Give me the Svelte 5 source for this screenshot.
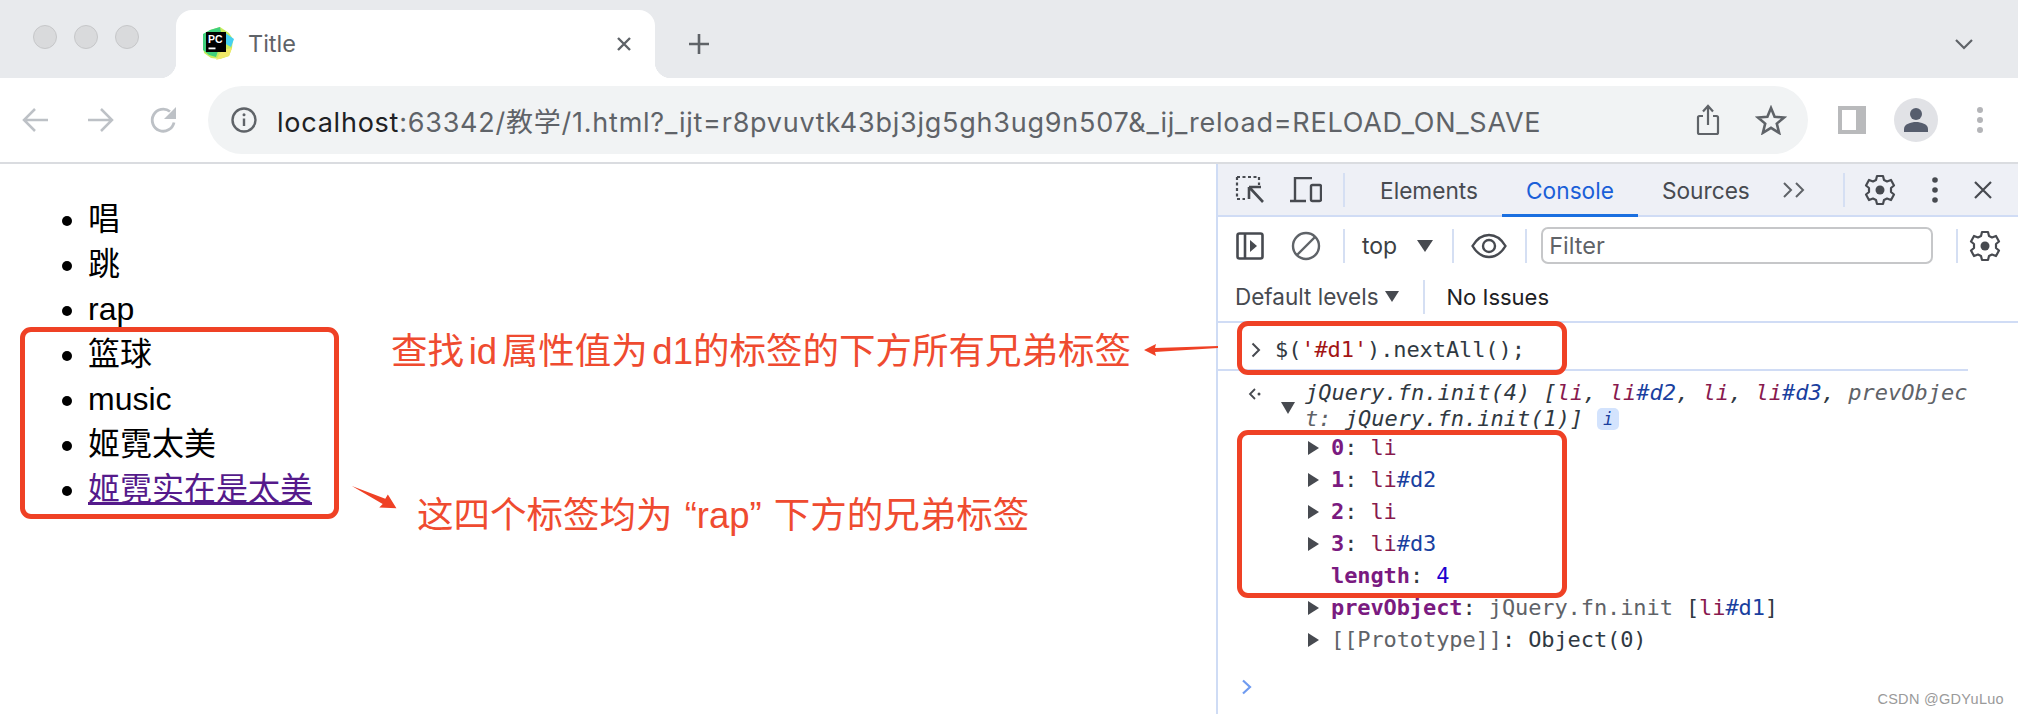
<script>
  const items = ['唱', '跳', 'rap', '篮球', 'music', '姬霓太美'];

  // expandable entries of the logged jQuery object
  const entries = [
    { key: '0', tag: 'li', id: '' },
    { key: '1', tag: 'li', id: '#d2' },
    { key: '2', tag: 'li', id: '' },
    { key: '3', tag: 'li', id: '#d3' },
  ];
</script>

<div class="window">
  <header class="tabstrip">
    <div class="lights"><i></i><i></i><i></i></div>
    <div class="tab">
      <svg class="favicon" width="32" height="34" viewBox="0 0 32 34">
        <path d="M8 4 18 1l9 6 4 6-1 9-3 8-9 3-9-1-7-5-1-9 1-10z" fill="#c8ec5c" />
        <path d="M1 8 8 4l10-3 2 12-6 18-7-2-6-5z" fill="#3fd07c" />
        <path d="M22 6 32 13l-3 8-7-4z" fill="#45d0f0" />
        <path d="M14 34 27 30l3-8-10 2z" fill="#f0e868" />
        <rect x="4" y="6" width="20" height="20" fill="#000" />
        <text x="6" y="16.500" class="pc">PC</text>
        <rect x="6.500" y="21.500" width="7" height="1.800" fill="#fff" />
      </svg>
      <span class="title">Title</span>
      <svg class="tab-close" width="20" height="20" viewBox="0 0 20 20">
        <path d="M4 4l12 12M16 4 4 16" stroke="#5f6368" stroke-width="2.400" />
      </svg>
    </div>
    <svg class="newtab" width="24" height="24" viewBox="0 0 24 24">
      <path d="M12 2v20M2 12h20" stroke="#5f6368" stroke-width="2.600" />
    </svg>
    <svg class="chev" width="22" height="14" viewBox="0 0 22 14">
      <path d="M3 3l8 8 8-8" fill="none" stroke="#5f6368" stroke-width="2.200" />
    </svg>
  </header>

  <nav class="toolbar">
    <span class="cell">
      <svg width="30" height="28" viewBox="0 0 30 28"><path d="M27 14H4M14 3 3 14l11 11" fill="none" stroke="#bdc1c6" stroke-width="2.500" /></svg>
    </span>
    <span class="cell">
      <svg width="30" height="28" viewBox="0 0 30 28"><path d="M3 14h23M16 3l11 11-11 11" fill="none" stroke="#bdc1c6" stroke-width="2.500" /></svg>
    </span>
    <span class="cell">
      <svg width="30" height="30" viewBox="0 0 30 30"><path d="M25 17.500A11 11 0 1 1 21 6.500" fill="none" stroke="#bdc1c6" stroke-width="2.800" /><path d="M27 2v12H15z" fill="#bdc1c6" /></svg>
    </span>
    <div class="omnibox">
      <svg class="info" width="28" height="28" viewBox="0 0 28 28">
        <circle cx="14" cy="14" r="11.500" fill="none" stroke="#5f6368" stroke-width="2.400" />
        <path d="M14 12.500v7.500" stroke="#5f6368" stroke-width="2.400" />
        <circle cx="14" cy="8.800" r="1.500" fill="#5f6368" />
      </svg>
      <span class="url"><b>localhost</b>:63342/教学/1.html?_ijt=r8pvuvtk43bj3jg5gh3ug9n507&amp;_ij_reload=RELOAD_ON_SAVE</span>
      <svg class="share" width="24" height="32" viewBox="0 0 24 32">
        <path d="M7 12H3.500a1.500 1.500 0 0 0-1.500 1.500v15A1.500 1.500 0 0 0 3.500 30h17a1.500 1.500 0 0 0 1.500-1.500v-15a1.500 1.500 0 0 0-1.500-1.500H17" fill="none" stroke="#5f6368" stroke-width="2.200" />
        <path d="M12 21V3M7 7.500 12 2l5 5.500" fill="none" stroke="#5f6368" stroke-width="2.200" />
      </svg>
      <svg class="star" width="32" height="30" viewBox="0 0 32 30">
        <path d="M16 3l3.600 8.800 9.400.7-7.200 6.100 2.300 9.200L16 22.800l-8.100 5 2.300-9.200L3 12.500l9.400-.7z" fill="none" stroke="#5f6368" stroke-width="2.600" />
      </svg>
    </div>
    <span class="cell side">
      <svg width="28" height="28" viewBox="0 0 28 28"><rect width="28" height="28" fill="#b9babc" /><rect x="4" y="4" width="14" height="20" fill="#fff" /></svg>
    </span>
    <span class="cell">
      <svg width="44" height="44" viewBox="0 0 44 44">
        <circle cx="22" cy="22" r="22" fill="#e1e2e6" />
        <circle cx="22" cy="16" r="6" fill="#565d6d" />
        <path d="M10 34v-3c0-5 7-7 12-7s12 2 12 7v3z" fill="#565d6d" />
      </svg>
    </span>
    <span class="cell">
      <svg width="6" height="26" viewBox="0 0 6 26"><circle cx="3" cy="3" r="3" fill="#b4b5b8" /><circle cx="3" cy="13" r="3" fill="#b4b5b8" /><circle cx="3" cy="23" r="3" fill="#b4b5b8" /></svg>
    </span>
  </nav>

  <main class="content">
    <section class="page">
      <ul>
        {#each items as item}
          <li>{item}</li>
        {/each}
        <li><a href="#top">姬霓实在是太美</a></li>
      </ul>
    </section>

    <section class="devtools">
      <div class="dt-tabs">
        <span class="dt-cell wide">
          <svg width="30" height="30" viewBox="0 0 30 30">
            <path d="M2 2h22v8M2 2v22h8" fill="none" stroke="#474a50" stroke-width="2.200" stroke-dasharray="3 2.500" />
            <path d="M14 12v12M14 12h12M15 13l13 14" fill="none" stroke="#474a50" stroke-width="2.600" />
          </svg>
        </span>
        <span class="dt-cell">
          <svg width="32" height="26" viewBox="0 0 32 26">
            <path d="M22 1H5v22M0 24h16" fill="none" stroke="#474a50" stroke-width="2.400" />
            <rect x="21" y="8" width="10" height="16" rx="1.500" fill="none" stroke="#474a50" stroke-width="2.400" />
          </svg>
        </span>
        <span class="dt-sep first"></span>
        <span class="dt-tab first-tab">Elements</span>
        <span class="dt-tab active">Console</span>
        <span class="dt-tab">Sources</span>
        <svg class="more" width="26" height="18" viewBox="0 0 26 18">
          <path d="M2 2l7 7-7 7M14 2l7 7-7 7" fill="none" stroke="#5f6368" stroke-width="2" />
        </svg>
        <span class="dt-sep after-more"></span>
        <svg class="gear g-top" width="32" height="32" viewBox="0 0 32 32">
          <path d="M13 2h6l1 4 3 1.500 4-1.500 3 5.500-3 2.500v4l3 2.500-3 5.500-4-1.500-3 1.500-1 4h-6l-1-4-3-1.500-4 1.500-3-5.500 3-2.500v-4l-3-2.500 3-5.500 4 1.500 3-1.500z" fill="none" stroke="#474a50" stroke-width="2.200" stroke-linejoin="round" />
          <circle cx="16" cy="16" r="4.500" fill="#474a50" />
        </svg>
        <svg class="vdots" width="6" height="26" viewBox="0 0 6 26"><circle cx="3" cy="3" r="2.800" fill="#474a50" /><circle cx="3" cy="13" r="2.800" fill="#474a50" /><circle cx="3" cy="23" r="2.800" fill="#474a50" /></svg>
        <svg class="dt-close" width="20" height="20" viewBox="0 0 20 20"><path d="M2 2l16 16M18 2 2 18" stroke="#474a50" stroke-width="2.200" /></svg>
      </div>

      <div class="dt-row filter-row">
        <span class="dt-cell wide">
          <svg width="28" height="28" viewBox="0 0 28 28">
            <rect x="1.500" y="1.500" width="25" height="25" rx="2" fill="none" stroke="#474a50" stroke-width="2.600" />
            <path d="M9 1.500v25" stroke="#474a50" stroke-width="2.600" />
            <path d="M14 8l7 6-7 6z" fill="#474a50" />
          </svg>
        </span>
        <span class="dt-cell">
          <svg width="30" height="30" viewBox="0 0 30 30">
            <circle cx="15" cy="15" r="13" fill="none" stroke="#5f6368" stroke-width="2.400" />
            <path d="M24 6 6 24" stroke="#5f6368" stroke-width="2.400" />
          </svg>
        </span>
        <span class="dt-sep first"></span>
        <span class="top-label">top</span>
        <svg class="tri" width="16" height="12" viewBox="0 0 16 12"><path d="M0 0h16L8 12z" fill="#474a50" /></svg>
        <span class="dt-sep tight"></span>
        <svg class="eye" width="36" height="26" viewBox="0 0 36 26">
          <path d="M1.500 13C6 5.500 12 2 18 2s12 3.500 16.500 11C30 20.500 24 24 18 24S6 20.500 1.500 13z" fill="none" stroke="#474a50" stroke-width="2.400" />
          <circle cx="18" cy="13" r="6" fill="none" stroke="#474a50" stroke-width="2.400" />
        </svg>
        <span class="dt-sep eye-sep"></span>
        <div class="filter">Filter</div>
        <span class="dt-sep filter-sep"></span>
        <svg class="gear g-row" width="32" height="32" viewBox="0 0 32 32">
          <path d="M13 2h6l1 4 3 1.500 4-1.500 3 5.500-3 2.500v4l3 2.500-3 5.500-4-1.500-3 1.500-1 4h-6l-1-4-3-1.500-4 1.500-3-5.500 3-2.500v-4l-3-2.500 3-5.500 4 1.500 3-1.500z" fill="none" stroke="#474a50" stroke-width="2.200" stroke-linejoin="round" />
          <circle cx="16" cy="16" r="4.500" fill="#474a50" />
        </svg>
      </div>

      <div class="dt-row levels-row">
        <span class="levels">Default levels</span>
        <svg class="tri small" width="14" height="11" viewBox="0 0 14 11"><path d="M0 0h14L7 11z" fill="#474a50" /></svg>
        <span class="dt-sep levels-sep"></span>
        <span class="issues">No Issues</span>
      </div>

      <div class="console">
        <div class="input-line">
          <svg class="prompt" width="10" height="16" viewBox="0 0 10 16"><path d="M1.500 1.500 8 8l-6.500 6.500" fill="none" stroke="#474a50" stroke-width="2" /></svg>
          <code>$(<span class="str">'#d1'</span>).nextAll();</code>
        </div>
        <div class="output">
          <svg class="ret" width="14" height="14" viewBox="0 0 14 14"><path d="M7 2 2 7l5 5" fill="none" stroke="#474a50" stroke-width="1.800" /><circle cx="11" cy="7" r="1.500" fill="#474a50" /></svg>
          <svg class="open" width="14" height="12" viewBox="0 0 14 12"><path d="M0 0h14L7 12z" fill="#474a50" /></svg>
          <code class="summary">jQuery.fn.init(4) [<span class="tag">li</span>, <span class="tag">li</span><span class="idn">#d2</span>, <span class="tag">li</span>, <span class="tag">li</span><span class="idn">#d3</span>, <span class="dim">prevObjec<br />t:</span> jQuery.fn.init(1)]<span class="badge">i</span></code>
        </div>
        {#each entries as e}
          <div class="prop">
            <svg class="caret" width="11" height="14" viewBox="0 0 11 14"><path d="M0 0l11 7-11 7z" fill="#474a50" /></svg>
            <code><span class="key">{e.key}</span>: <span class="tag">{e.tag}</span><span class="idn">{e.id}</span></code>
          </div>
        {/each}
        <div class="prop">
          <code class="nocaret"><span class="key">length</span>: <span class="num">4</span></code>
        </div>
        <div class="prop">
          <svg class="caret" width="11" height="14" viewBox="0 0 11 14"><path d="M0 0l11 7-11 7z" fill="#474a50" /></svg>
          <code><span class="key">prevObject</span>: <span class="dim">jQuery.fn.init</span> [<span class="tag">li</span><span class="idn">#d1</span>]</code>
        </div>
        <div class="prop">
          <svg class="caret" width="11" height="14" viewBox="0 0 11 14"><path d="M0 0l11 7-11 7z" fill="#474a50" /></svg>
          <code><span class="dim">[[Prototype]]</span>: Object(0)</code>
        </div>
        <svg class="caret-input" width="12" height="16" viewBox="0 0 12 16"><path d="M2 1.500 9 8l-7 6.500" fill="none" stroke="#6f9bf0" stroke-width="2.200" /></svg>
      </div>
    </section>

    <!-- annotations drawn on top of the screenshot -->
    <div class="box box-list"></div>
    <div class="box box-input"></div>
    <div class="box box-props"></div>
    <p class="note note-a">查找 id 属性值为 d1的标签的下方所有兄弟标签</p>
    <p class="note note-b">这四个标签均为 “rap” 下方的兄弟标签</p>
    <svg class="arrow arrow-a" width="74" height="16" viewBox="0 0 74 16"><path d="M0 8 12 2l-1 4 63-2v2L11 10l1 4z" fill="#ef4125" /></svg>
    <svg class="arrow arrow-b" width="50" height="24" viewBox="0 0 54 28"><path d="M0 0 39 15l3-5 10 16-20-1 4-4z" fill="#ef4125" /></svg>
    <span class="mark">CSDN @GDYuLuo</span>
  </main>
</div>

<style>
  :global(body) {
    margin: 0;
    background: #fff;
    overflow: hidden;
  }

  .window {
    width: 2018px;
    height: 714px;
    display: flex;
    flex-direction: column;
    font-family: Inter, "Noto Sans CJK SC", sans-serif;
  }

  /* tab strip */
  .tabstrip {
    height: 78px;
    flex: none;
    display: flex;
    align-items: flex-end;
    background: #e8eaed;
  }
  .lights {
    width: 176px;
    height: 78px;
    flex: none;
    display: flex;
    align-items: center;
    gap: 17px;
    padding: 0 0 4px 33px;
    box-sizing: border-box;
  }
  .lights i {
    width: 24px;
    height: 24px;
    box-sizing: border-box;
    border-radius: 50%;
    background: #d9dadc;
    border: 1px solid #c6c7c9;
  }
  .tab {
    position: relative;
    width: 479px;
    height: 68px;
    display: flex;
    align-items: center;
    padding: 0 0 0 26px;
    box-sizing: border-box;
    background: #fff;
    border-radius: 16px 16px 0 0;
  }
  .tab::before,
  .tab::after {
    content: "";
    position: absolute;
    bottom: 0;
    width: 16px;
    height: 16px;
  }
  .tab::before {
    left: -16px;
    background: radial-gradient(circle at 0 0, #e8eaed 16px, #fff 16.500px);
  }
  .tab::after {
    right: -16px;
    background: radial-gradient(circle at 100% 0, #e8eaed 16px, #fff 16.500px);
  }
  .favicon { flex: none; margin-top: -2px; }
  .pc {
    font: 700 10.500px "Liberation Sans", sans-serif;
    fill: #fff;
  }
  .title {
    margin-left: 14px;
    padding-bottom: 1px;
    font-size: 23.500px;
    color: #5f6368;
    flex: 1;
  }
  .tab-close { margin-right: 21px; }
  .newtab {
    align-self: center;
    margin: 10px 0 0 32px;
  }
  .chev {
    align-self: center;
    margin: 10px 0 0 1242px;
  }

  /* address bar */
  .toolbar {
    height: 86px;
    flex: none;
    display: flex;
    align-items: center;
    padding-left: 4px;
    box-sizing: border-box;
    border-bottom: 2px solid #dadce0;
  }
  .cell {
    width: 64px;
    flex: none;
    display: flex;
    align-items: center;
    justify-content: center;
  }
  .cell.side { margin-left: 12px; }
  .omnibox {
    width: 1600px;
    height: 68px;
    flex: none;
    margin-left: 12px;
    display: flex;
    align-items: center;
    padding-left: 22px;
    box-sizing: border-box;
    border-radius: 34px;
    background: #f1f3f4;
  }
  .info { flex: none; }
  .url {
    margin-left: 19px;
    width: 1265px;
    flex: none;
    white-space: nowrap;
    font-size: 27px;
    letter-spacing: 0.76px;
    color: #5f6368;
  }
  .url b {
    font-weight: 400;
    color: #202124;
  }
  .share { margin-left: 154px; flex: none; }
  .star { margin-left: 35px; flex: none; }

  /* page + devtools */
  .content {
    position: relative;
    flex: 1;
    display: flex;
    min-height: 0;
  }
  .page {
    width: 1216px;
    flex: none;
  }
  ul {
    margin: 33px 0 0;
    padding: 0 0 0 88px;
    font: 32px/45px "Liberation Sans", "Noto Sans CJK SC", sans-serif;
    color: #000;
  }
  a { color: #551a8b; }

  .devtools {
    flex: 1;
    min-width: 0;
    box-sizing: border-box;
    border-left: 2px solid #cfdcf5;
    display: flex;
    flex-direction: column;
    font-size: 23px;
    color: #3c4043;
  }
  .dt-tabs {
    height: 53px;
    flex: none;
    display: flex;
    align-items: center;
    box-sizing: border-box;
    background: #eef0f6;
    border-bottom: 2px solid #d0dcf5;
  }
  .dt-cell {
    width: 50px;
    flex: none;
    display: flex;
    justify-content: center;
  }
  .dt-cell.wide { width: 62px; margin-left: 1px; }
  .dt-sep {
    width: 2px;
    height: 34px;
    flex: none;
    background: #d5dff3;
  }
  .dt-sep.first { margin-left: 12px; }
  .dt-tab {
    align-self: stretch;
    display: flex;
    align-items: center;
    padding: 0 24px;
    margin-bottom: -2px;
    white-space: nowrap;
    color: #474a50;
    font-size: 22.700px;
  }
  .first-tab { margin-left: 11px; }
  .dt-tab.active {
    color: #1a5fd8;
    border-bottom: 3px solid #1a6fe0;
    box-sizing: border-box;
    padding-top: 3px;
  }
  .more { margin-left: 8px; flex: none; }
  .after-more { margin-left: 35px; }
  .gear { flex: none; }
  .g-top { margin-left: 19px; }
  .vdots { margin-left: 36px; flex: none; }
  .dt-close { margin-left: 35px; flex: none; }

  .dt-row {
    flex: none;
    display: flex;
    align-items: center;
    box-sizing: border-box;
  }
  .filter-row { height: 58px; padding-bottom: 1px; }
  .top-label { margin-left: 17px; }
  .tri { margin-left: 20px; flex: none; }
  .tri.small { margin-left: 6px; }
  .dt-sep.tight { margin-left: 19px; }
  .eye { margin-left: 17px; flex: none; }
  .dt-sep.eye-sep { margin-left: 18px; }
  .filter {
    width: 392px;
    height: 37px;
    margin-left: 14px;
    flex: none;
    box-sizing: border-box;
    padding-left: 6px;
    line-height: 33px;
    border: 2px solid #c6c7c9;
    border-radius: 7px;
    background: #fff;
    color: #5f6368;
    font-size: 23.500px;
  }
  .dt-sep.filter-sep { margin-left: 23px; }
  .g-row { margin-left: 11px; }

  .levels-row {
    height: 48px;
    padding-bottom: 3px;
    border-bottom: 2px solid #d0dcf5;
  }
  .levels {
    margin-left: 17px;
    color: #474a50;
    font-size: 22.500px;
  }
  .dt-sep.levels-sep { margin-left: 24px; }
  .issues {
    margin-left: 22px;
    color: #202124;
    font-size: 22px;
  }

  code {
    font: 22px/32px "DejaVu Sans Mono", monospace;
    letter-spacing: -0.1px;
    color: #303942;
    white-space: pre;
  }
  .console {
    position: relative;
    flex: 1;
  }
  .input-line {
    height: 48px;
    padding-top: 8px;
    margin: 0 50px 0 0;
    display: flex;
    align-items: center;
    border-bottom: 2px solid #d0dcf5;
    box-sizing: border-box;
  }
  .prompt { margin-left: 33px; margin-right: 14px; flex: none; }
  .str { color: #a31515; }
  .output {
    position: relative;
    padding: 9px 0 0 87px;
    height: 61px;
    box-sizing: border-box;
  }
  .ret { position: absolute; left: 30px; top: 16px; }
  .open { position: absolute; left: 63px; top: 31px; }
  .summary {
    display: block;
    font-style: italic;
    line-height: 26px;
    letter-spacing: 0;
  }
  .tag { color: #881a4e; }
  .idn { color: #1a3f9f; }
  .dim { color: #5f6368; }
  .badge {
    display: inline-block;
    width: 22px;
    height: 22px;
    margin-left: 14px;
    border-radius: 5px;
    background: #d3e3fd;
    color: #1a3f9f;
    font-size: 17px;
    line-height: 22px;
    text-align: center;
    vertical-align: 1px;
  }
  .prop {
    height: 32px;
    display: flex;
    align-items: center;
    padding-left: 90px;
  }
  .caret { flex: none; margin-right: 12px; }
  .nocaret { margin-left: 23px; }
  .key { color: #7a1a80; font-weight: 700; }
  .num { color: #1c00cf; }
  .caret-input { position: absolute; left: 23px; top: 356px; }

  /* annotation overlays */
  .box {
    position: absolute;
    box-sizing: border-box;
    border: 5px solid #ef4125;
    border-radius: 11px;
  }
  .box-list { left: 20px; top: 163px; width: 319px; height: 192px; }
  .box-input { left: 1237px; top: 157px; width: 330px; height: 54px; }
  .box-props { left: 1237px; top: 266px; width: 330px; height: 168px; }
  .note {
    position: absolute;
    margin: 0;
    white-space: nowrap;
    color: #ef4b30;
    font: 36.500px/48px "Liberation Sans", "Noto Sans CJK SC", sans-serif;
  }
  .note-a { left: 391px; top: 164px; word-spacing: -5.500px; }
  .note-b { left: 417px; top: 328px; word-spacing: 2px; }
  .arrow { position: absolute; }
  .arrow-a { left: 1144px; top: 178px; }
  .arrow-b { left: 350px; top: 322px; }
  .mark {
    position: absolute;
    right: 14px;
    bottom: 7px;
    color: #9a9a9a;
    font: 14.500px "Liberation Sans", sans-serif;
    letter-spacing: 0.3px;
  }
</style>
